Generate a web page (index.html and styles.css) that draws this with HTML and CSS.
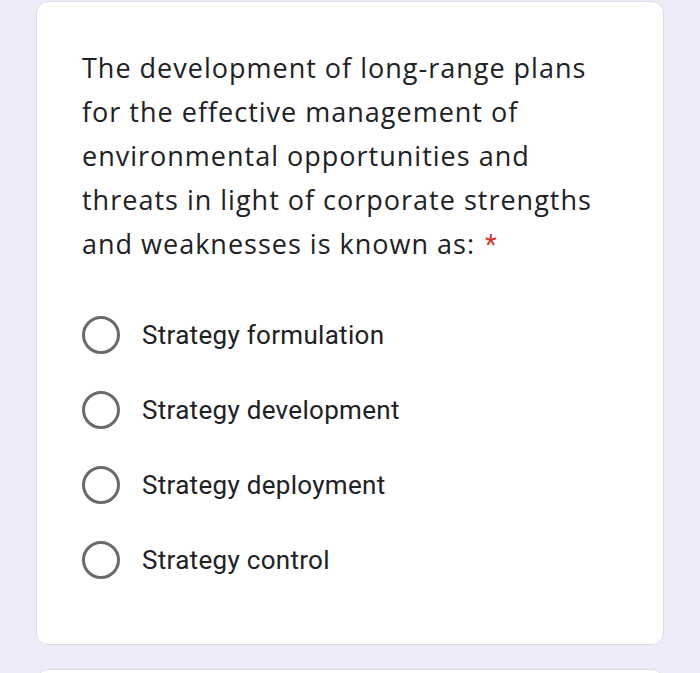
FILE: index.html
```html
<!DOCTYPE html>
<html>
<head>
<meta charset="utf-8">
<link rel="stylesheet" href="styles.css">
</head>
<body>
<div class="page">
  <div class="card">
    <div class="question">The development of long-range plans for the effective management of environmental opportunities and threats in light of corporate strengths and weaknesses is known as:<span class="req">*</span></div>
    <div class="options">
      <label class="option"><span class="radio"></span><span class="opt-text">Strategy formulation</span></label>
      <label class="option"><span class="radio"></span><span class="opt-text">Strategy development</span></label>
      <label class="option"><span class="radio"></span><span class="opt-text">Strategy deployment</span></label>
      <label class="option"><span class="radio"></span><span class="opt-text">Strategy control</span></label>
    </div>
  </div>
  <div class="card next"></div>
</div>
</body>
</html>
```
FILE: styles.css
```css
html, body {
  margin: 0;
  padding: 0;
  background: #efebf8;
  overflow: hidden;
  height: 673px;
}
.page {
  display: flex;
  flex-direction: column;
  gap: 24px;
  padding: 1px 36px 0 36px;
}
.card {
  background: #ffffff;
  border: 1px solid #dadce0;
  border-radius: 12px;
  padding: 44px 40px 47px 45px;
}
.card.next {
  height: 40px;
  padding: 0;
}
.question {
  font-family: "Open Sans", Roboto, sans-serif;
  font-size: 27px;
  letter-spacing: 1px;
  line-height: 44px;
  color: #202124;
  width: 525px;
}
.req {
  color: #d93025;
  margin-left: 10px;
  font-family: Roboto, sans-serif;
  letter-spacing: 0;
}
.options {
  margin-top: 30px;
  display: flex;
  flex-direction: column;
}
.option {
  display: flex;
  align-items: center;
  height: 75px;
}
.radio {
  box-sizing: border-box;
  width: 38px;
  height: 38px;
  border: 3.5px solid #6a6a6a;
  border-radius: 50%;
  flex: none;
}
.opt-text {
  margin-left: 22px;
  font-family: Roboto, sans-serif;
  font-size: 26px;
  letter-spacing: 0.3px;
  color: #202124;
}
```
